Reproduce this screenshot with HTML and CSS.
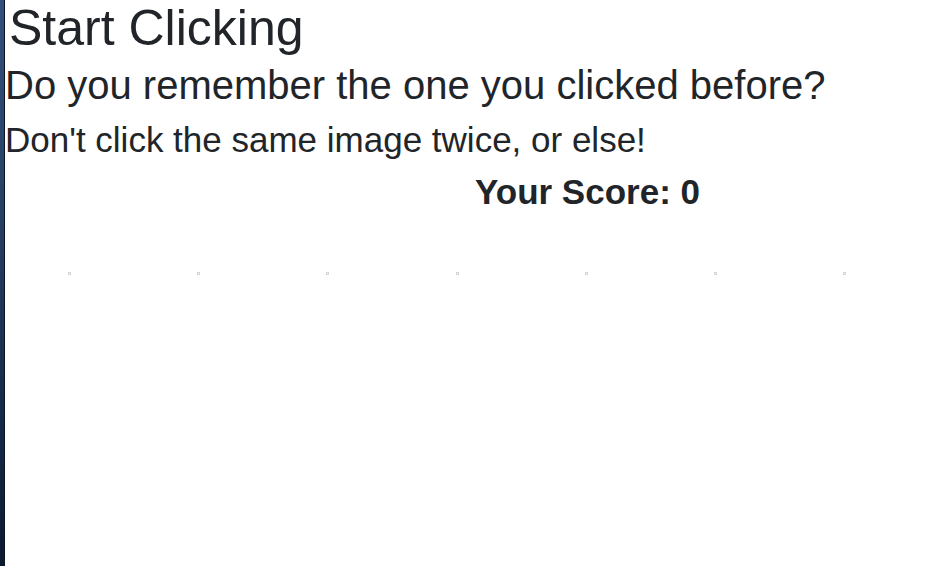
FILE: index.html
```html
<!DOCTYPE html>
<html lang="en">
<head>
<meta charset="utf-8">
<title>Clicky Game</title>
<link rel="stylesheet" href="styles.css">
</head>
<body>
  <div class="page">
    <div class="strip"></div>
    <main class="content">
      <h1 class="title">Start Clicking</h1>
      <h2 class="subtitle">Do you remember the one you clicked before?</h2>
      <h3 class="warning">Don't click the same image twice, or else!</h3>
      <div class="score-row">
        <h4 class="score">Your Score: 0</h4>
      </div>
      <div class="cards">
        <div class="card"><span class="img"></span></div>
        <div class="card"><span class="img"></span></div>
        <div class="card"><span class="img"></span></div>
        <div class="card"><span class="img"></span></div>
        <div class="card"><span class="img"></span></div>
        <div class="card"><span class="img"></span></div>
        <div class="card"><span class="img"></span></div>
      </div>
    </main>
  </div>
</body>
</html>
```
FILE: styles.css
```css
html, body {
  margin: 0;
  padding: 0;
  height: 100%;
  background: #ffffff;
}
body {
  font-family: "Liberation Sans", Arial, Helvetica, sans-serif;
  color: #212529;
}
.page {
  display: flex;
  min-height: 566px;
}
.strip {
  width: 4px;
  flex: 0 0 4px;
  background: linear-gradient(180deg, #33507a 0%, #274166 35%, #172c4c 70%, #0b1930 100%);
  border-right: 1px solid #0c1424;
}
.content {
  flex: 1;
  background: #fff;
}
.title {
  margin: 0 0 0 4px;
  font-size: 50px;
  font-weight: 400;
  line-height: 57px;
}
.subtitle {
  margin: 0;
  font-size: 40px;
  font-weight: 400;
  line-height: 57px;
}
.warning {
  margin: 0;
  font-size: 35px;
  font-weight: 400;
  line-height: 52px;
}
.score-row {
  display: flex;
  padding-left: 470px;
}
.score {
  margin: 0;
  font-size: 35px;
  font-weight: 700;
  line-height: 52px;
}
.cards {
  display: grid;
  grid-template-columns: repeat(7, 129.2px);
  margin-top: 54px;
}
.card {
  display: flex;
  justify-content: center;
}
.img {
  width: 3px;
  height: 3px;
  box-sizing: border-box;
  border: 1px solid #d4d4d4;
}
```
